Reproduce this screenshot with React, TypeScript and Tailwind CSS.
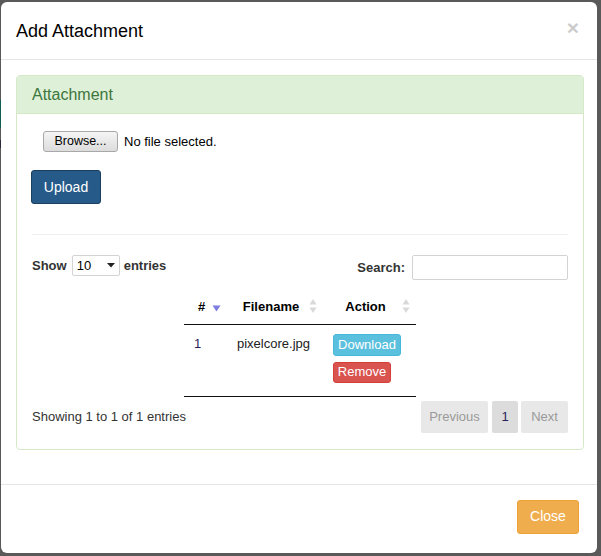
import React from "react";

function SortBoth() {
  return (
    <svg width="8" height="16" viewBox="0 0 8 16" className="absolute right-[6px] top-1/2 -translate-y-1/2">
      <path d="M4 1 L7.5 6.5 L0.5 6.5 Z" fill="#d9d9d9" />
      <path d="M4 15 L7.5 9.5 L0.5 9.5 Z" fill="#d9d9d9" />
    </svg>
  );
}

function SortDesc() {
  return (
    <svg width="9" height="7" viewBox="0 0 9 7" className="absolute right-[6px] top-[16px]">
      <path d="M0.5 0.5 L8.5 0.5 L4.5 6.5 Z" fill="#7d7de0" />
    </svg>
  );
}

export default function App() {
  return (
    <div
      className="w-[601px] h-[556px] bg-[#595959] flex pt-[2px] pb-[3px] pr-[4px]"
      style={{ fontFamily: '"Liberation Sans", Arial, sans-serif' }}
    >
      <div className="w-[1px] flex flex-col">
        <div className="h-[98px]" />
        <div className="h-[28px] bg-[#0f5c52]" />
        <div className="h-[12px]" />
        <div className="h-[8px] bg-[#2a2a38]" />
      </div>
      <div className="flex-1 min-w-0 bg-white rounded-[6px] flex flex-col text-[#333]">
        {/* header */}
        <div className="h-[58px] border-b border-[#e5e5e5] flex items-center justify-between pl-[15px] pr-[18px]">
          <div className="text-[18px] leading-none text-black">Add Attachment</div>
          <div className="text-[21px] font-bold leading-none text-[#000] opacity-20 -mt-[6px]">×</div>
        </div>
        {/* body */}
        <div className="pt-[15px] pl-[15px] pr-[13px] pb-[34px]">
          <div className="border border-[#d6e9c6] rounded-[4px]">
            <div className="h-[38px] bg-[#dff0d8] border-b border-[#d6e9c6] rounded-t-[3px] px-[15px] pt-[1px] flex items-center text-[16px] text-[#3c763d]">
              Attachment
            </div>
            <div className="pt-[17px] px-[15px] pb-[16px]">
              <div className="flex items-center ml-[11px] text-[13px] text-black">
                <div className="w-[75px] h-[21px] border border-[#a8a8a8] rounded-[3px] bg-gradient-to-b from-[#f5f5f5] to-[#dcdcdc] flex items-center justify-center text-[12.5px] text-black">
                  Browse...
                </div>
                <span className="ml-[6px]">No file selected.</span>
              </div>
              <div className="mt-[18px] -ml-[1px] w-[70px] h-[34px] bg-[#265a88] border border-[#1c3f60] rounded-[3px] flex items-center justify-center text-white text-[14px]">
                Upload
              </div>
              <div className="mt-[30px] h-[1px] bg-[#eeeeee]" />
              <div className="mt-[20px] flex items-start justify-between">
                <div className="flex items-center text-[13px] font-bold text-[#333] mt-0">
                  <span>Show</span>
                  <div className="ml-[5px] mr-[4px] w-[48px] h-[21px] border border-[#d3d3d3] rounded-[2px] flex items-center justify-between pl-[4px] pr-[4px] font-normal text-black text-[13px]">
                    <span>10</span>
                    <svg width="8" height="5" viewBox="0 0 8 5"><path d="M0 0 L8 0 L4 4.5 Z" fill="#222" /></svg>
                  </div>
                  <span>entries</span>
                </div>
                <div className="flex items-center text-[13px] font-bold text-[#333]">
                  <span>Search:</span>
                  <div className="ml-[7px] w-[156px] h-[25px] border border-[#d3d3d3] rounded-[2px] bg-white" />
                </div>
              </div>
              <table className="mx-auto mt-[9px] border-collapse text-[13px]">
                <thead>
                  <tr className="border-b border-[#111]">
                    <th className="relative w-[43px] h-[35px] pl-[10px] pr-[18px] text-center font-bold text-black">
                      #
                      <SortDesc />
                    </th>
                    <th className="relative w-[96px] h-[35px] pl-[10px] pr-[18px] text-center font-bold text-black">
                      Filename
                      <SortBoth />
                    </th>
                    <th className="relative w-[93px] h-[35px] pl-[10px] pr-[18px] text-center font-bold text-black">
                      Action
                      <SortBoth />
                    </th>
                  </tr>
                </thead>
                <tbody>
                  <tr className="border-b border-[#111]">
                    <td className="align-top pl-[10px] pt-[9px] h-[72px] text-[#2a1f5a]">1</td>
                    <td className="align-top pl-[10px] pt-[9px] text-[#222]">pixelcore.jpg</td>
                    <td className="align-top pl-[10px] pt-[9px]">
                      <div className="w-[68px] h-[22px] bg-[#5bc0de] border border-[#46b8da] rounded-[3px] flex items-center justify-center text-white text-[13px]">
                        Download
                      </div>
                      <div className="mt-[6px] w-[58px] h-[21px] bg-[#d9534f] border border-[#d43f3a] rounded-[3px] flex items-center justify-center text-white text-[13px]">
                        Remove
                      </div>
                    </td>
                  </tr>
                </tbody>
              </table>
              <div className="mt-[4px] flex items-center justify-between">
                <span className="text-[13px] text-[#333]">Showing 1 to 1 of 1 entries</span>
                <div className="flex items-center text-[13px]">
                  <div className="w-[67px] h-[32px] bg-[#e8e8e8] rounded-[2px] flex items-center justify-center text-[#9a9a9a]">
                    Previous
                  </div>
                  <div className="ml-[4px] w-[26px] h-[32px] bg-[#dcdcdc] rounded-[2px] flex items-center justify-center text-[#2a1f5a]">
                    1
                  </div>
                  <div className="ml-[3px] w-[47px] h-[32px] bg-[#e8e8e8] rounded-[2px] flex items-center justify-center text-[#9a9a9a]">
                    Next
                  </div>
                </div>
              </div>
            </div>
          </div>
        </div>
        {/* footer */}
        <div className="border-t border-[#e5e5e5] flex justify-end pt-[15px] pr-[18px]">
          <div className="w-[62px] h-[34px] bg-[#f0ad4e] border border-[#eea236] rounded-[3px] flex items-center justify-center text-white text-[14px]">
            Close
          </div>
        </div>
      </div>
    </div>
  );
}
